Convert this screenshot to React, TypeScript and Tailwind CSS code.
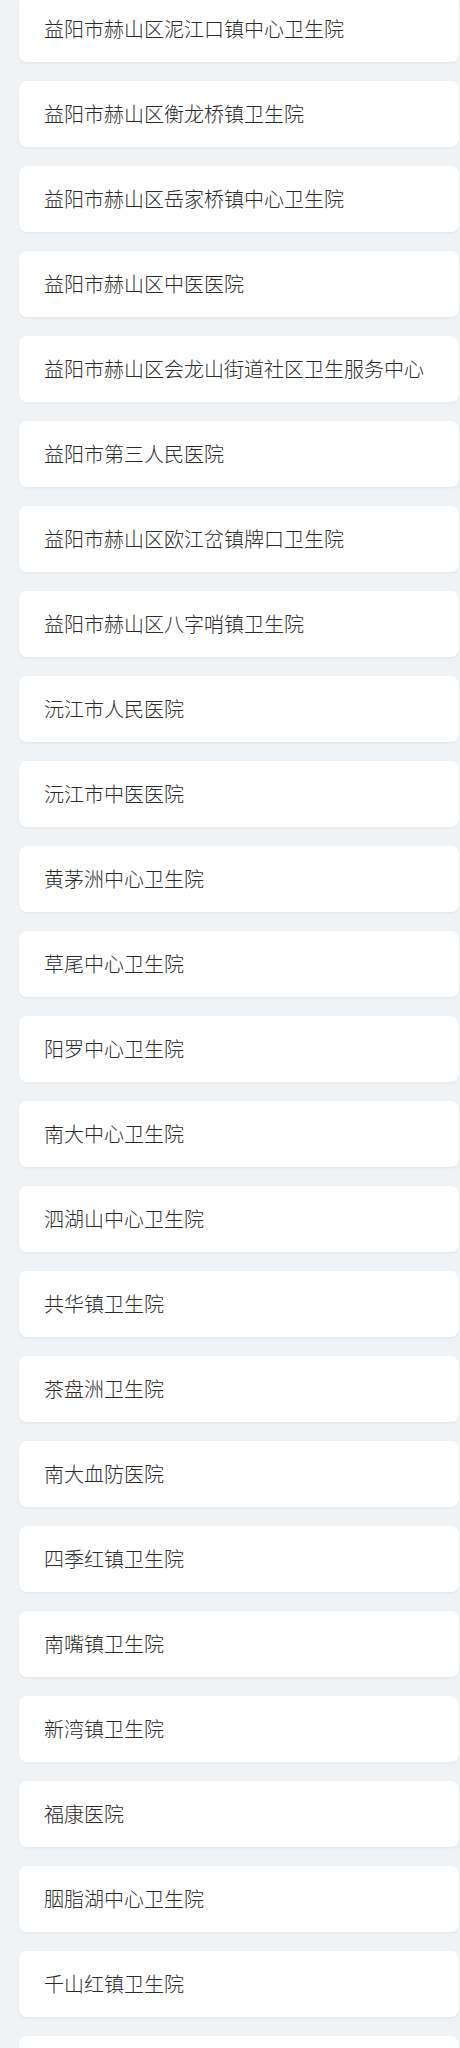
const hospitals = [
  '益阳市赫山区泥江口镇中心卫生院',
  '益阳市赫山区衡龙桥镇卫生院',
  '益阳市赫山区岳家桥镇中心卫生院',
  '益阳市赫山区中医医院',
  '益阳市赫山区会龙山街道社区卫生服务中心',
  '益阳市第三人民医院',
  '益阳市赫山区欧江岔镇牌口卫生院',
  '益阳市赫山区八字哨镇卫生院',
  '沅江市人民医院',
  '沅江市中医医院',
  '黄茅洲中心卫生院',
  '草尾中心卫生院',
  '阳罗中心卫生院',
  '南大中心卫生院',
  '泗湖山中心卫生院',
  '共华镇卫生院',
  '茶盘洲卫生院',
  '南大血防医院',
  '四季红镇卫生院',
  '南嘴镇卫生院',
  '新湾镇卫生院',
  '福康医院',
  '胭脂湖中心卫生院',
  '千山红镇卫生院',
  '', // last card is cut off by the bottom edge
];

export default function App() {
  return (
    <div className="h-[2048px] overflow-hidden bg-[#eff3f6] font-['Noto_Sans_CJK_SC',sans-serif]">
      <div className="-mt-[4px] ml-[19px] mr-[1px] flex flex-col gap-[19px]">
        {hospitals.map((name, i) => (
          <div
            key={i}
            className="flex h-[66px] shrink-0 items-center rounded-[8px] bg-white pl-[25px] shadow-[0_1px_3px_rgba(0,0,0,0.06)]"
          >
            <span className="text-[20px] font-light leading-none text-[#2b2b2b]">{name}</span>
          </div>
        ))}
      </div>
    </div>
  );
}
